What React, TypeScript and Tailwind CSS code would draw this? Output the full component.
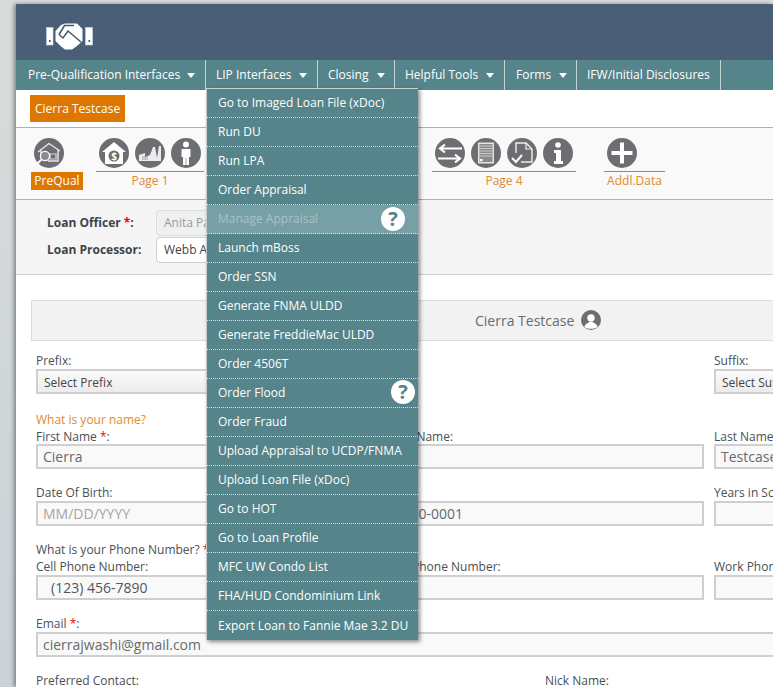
import React from "react";

const Circle = ({ children, size = 30 }: { children?: React.ReactNode; size?: number }) => (
  <svg width={size} height={size} viewBox="0 0 30 30" className="block shrink-0">
    <circle cx="15" cy="15" r="15" fill="#6d6e71" />
    {children}
  </svg>
);

const Logo = () => (
  <svg width="47" height="28" viewBox="0 0 47 28" className="block">
    <rect x="0.5" y="5.5" width="6.5" height="17.5" fill="#fff" stroke="#bcd8f0" strokeWidth="0.6" />
    <rect x="39.5" y="5.5" width="7" height="17.5" fill="#fff" stroke="#bcd8f0" strokeWidth="0.6" />
    <rect x="3" y="18" width="1.6" height="2" fill="#3f5870" />
    <rect x="42.5" y="18" width="1.6" height="2" fill="#3f5870" />
    <path d="M9.5 9 L15 3 L19 1.5 L31 1.5 L36.5 7 L36.5 19 L31 24 L26 27.5 L19 27.5 L15 24.5 L9.5 19 Z" fill="#fff" />
    <path d="M13 12.5 L18.5 3.5 L28 3.5 M13 12.5 L17 16 L22 9 L35 20" fill="none" stroke="#3f5870" strokeWidth="1.5" />
  </svg>
);

const HouseSearch = () => (
  <Circle>
    <path d="M4 14 L15 5.5 L26 13 M7 12 V16 M24 12 V23 H14" fill="none" stroke="#e8e8e8" strokeWidth="1.4" />
    <path d="M16 16 H22 V21 H16 Z" fill="none" stroke="#dcdcdc" strokeWidth="1.2" />
    <circle cx="11" cy="18" r="4.6" fill="#8b8c8e" stroke="#fff" strokeWidth="1.3" />
    <path d="M7.5 21.5 L3.5 25.5" stroke="#fff" strokeWidth="1.8" />
  </Circle>
);
const HouseDollar = () => (
  <Circle>
    <path d="M15 4 L27 14 L24 14 V26 H6 V14 H3 Z" fill="#fff" />
    <circle cx="15" cy="18" r="5.5" fill="#6d6e71" />
    <text x="15" y="21.5" textAnchor="middle" fontSize="10" fontWeight="700" fill="#fff" fontFamily="'Open Sans',sans-serif">$</text>
  </Circle>
);
const Factory = () => (
  <Circle>
    <path d="M4 23 V17 L10 15 V19 L15 17 L18 9 L20 9 L22 20 L24 8 L26 8 V23 Z" fill="#ececec" />
    <path d="M7 19 H13 M7 21 H13" stroke="#8a8a8a" strokeWidth="0.8" />
  </Circle>
);
const Person = () => (
  <Circle>
    <circle cx="15" cy="6.5" r="3" fill="#fff" />
    <path d="M10.5 11 H19.5 V19 H18 V27 H12 V19 H10.5 Z" fill="#fff" />
    <path d="M15 20 V27" stroke="#6d6e71" strokeWidth="0.6" />
  </Circle>
);
const Swap = () => (
  <Circle>
    <path d="M27 10.5 H6 M10 6.5 L5 10.5 L10 14.5" fill="none" stroke="#fff" strokeWidth="2.2" />
    <path d="M3 20.5 H25 M20 16.5 L25 20.5 L20 24.5" fill="none" stroke="#fff" strokeWidth="2.2" />
  </Circle>
);
const Doc = () => (
  <Circle>
    <rect x="7" y="4.5" width="16" height="21" fill="#e4e4e4" />
    <rect x="8.5" y="6" width="13" height="18" fill="#8b8c8e" />
    <path d="M9 8 H21 M9 10.5 H21 M9 13 H21 M9 15.5 H21 M9 18 H21" stroke="#d8d8d8" strokeWidth="0.8" />
    <rect x="9" y="21" width="2.5" height="2.2" fill="#fff" />
  </Circle>
);
const DocCheck = () => (
  <Circle>
    <path d="M9 15 V5 H19 L25 11 V24 H14" fill="none" stroke="#f0f0f0" strokeWidth="1.4" />
    <path d="M19 5 V11 H25" fill="none" stroke="#f0f0f0" strokeWidth="1.2" />
    <path d="M5 20 L9 24 L15 17" fill="none" stroke="#fff" strokeWidth="2" />
  </Circle>
);
const Info = () => (
  <Circle>
    <circle cx="15" cy="7" r="2.8" fill="#fff" />
    <path d="M11 12 H18 V23 H20 V26 H11 V23 H13 V15 H11 Z" fill="#fff" />
  </Circle>
);
const Plus = () => (
  <Circle>
    <path d="M15 4.5 V25.5 M4.5 15 H25.5" stroke="#fff" strokeWidth="4" />
  </Circle>
);
const User = () => (
  <Circle size={20}>
    <circle cx="15" cy="12" r="5.5" fill="#fff" />
    <path d="M5 25 C7 20 11 19.5 12.5 18 H17.5 C19 19.5 23 20 25 25 C21 29 9 29 5 25 Z" fill="#fff" />
  </Circle>
);

const Help = () => (
  <span className="flex h-6 w-6 items-center justify-center rounded-full bg-white text-[20px] font-bold leading-none text-[#55848a]">?</span>
);

const navItems = [
  { label: "Pre-Qualification Interfaces", w: "w-[190px] pl-[12px]", caret: "ml-[7px]" },
  { label: "LIP Interfaces", w: "w-[112px] pl-[10px]", caret: "ml-[7px]" },
  { label: "Closing", w: "w-[77px] pl-[10px]", caret: "ml-[9px]" },
  { label: "Helpful Tools", w: "w-[110px] pl-[10px]", caret: "ml-[8px]" },
  { label: "Forms", w: "w-[72px] pl-[11px]", caret: "ml-[8px]" },
  { label: "IFW/Initial Disclosures", w: "w-[144px] pl-[10px]", caret: "" },
];

const menuItems = [
  "Go to Imaged Loan File (xDoc)",
  "Run DU",
  "Run LPA",
  "Order Appraisal",
  "Manage Appraisal",
  "Launch mBoss",
  "Order SSN",
  "Generate FNMA ULDD",
  "Generate FreddieMac ULDD",
  "Order 4506T",
  "Order Flood",
  "Order Fraud",
  "Upload Appraisal to UCDP/FNMA",
  "Upload Loan File (xDoc)",
  "Go to HOT",
  "Go to Loan Profile",
  "MFC UW Condo List",
  "FHA/HUD Condominium Link",
  "Export Loan to Fannie Mae 3.2 DU",
];

const Field = ({
  label,
  value,
  placeholder,
  labelClass = "h-[18px] leading-[20px]",
  indent = false,
}: {
  label?: React.ReactNode;
  value?: string;
  placeholder?: string;
  labelClass?: string;
  indent?: boolean;
}) => (
  <div className="w-[329px] shrink-0">
    <div className={`text-[12px] text-[#4a4f55] ${labelClass}`}>{label}</div>
    <div
      className={`h-[25px] border-2 border-[#cfcfcf] bg-[#f9f9f9] text-[14px] leading-[22px] ${indent ? "pl-[13px] text-[#555]" : "pl-[5px]"} ${placeholder ? "text-[#a5a5a5]" : "text-[#6a6a6a]"}`}
    >
      {value || placeholder}
    </div>
  </div>
);

const Select = ({ text }: { text: string }) => (
  <div className="h-[25px] w-[329px] shrink-0 overflow-hidden whitespace-nowrap border-2 border-[#cfcfcf] bg-gradient-to-b from-[#fbfbfb] to-[#ececec] pl-[6px] text-[12px] leading-[23px] text-[#444]">
    {text}
  </div>
);

const Star = () => <span className="text-[#ff0000]">*</span>;

const Group = ({ w, label, children, className = "" }: { w: string; label: string; children?: React.ReactNode; className?: string }) => (
  <div className={`flex shrink-0 flex-col ${w} ${className}`}>
    <div className="flex h-[37px] items-start justify-center gap-[6px] border-b border-[#d9791a] pt-[3px]">{children}</div>
    <div className="text-center text-[12px] leading-[18px] text-[#e08a2e]">{label}</div>
  </div>
);

const small = "h-[17px] leading-[19px]";

export default function App() {
  return (
    <div
      className="relative h-[687px] w-[773px] overflow-hidden bg-gradient-to-b from-[#d9dcda] to-[#c9d3d9] pt-[4px] pl-[16px] text-[#4a4f55]"
      style={{ fontFamily: "'Open Sans', sans-serif" }}
    >
      <div className="h-[683px] w-[757px] overflow-hidden bg-white shadow-[-2px_0_4px_rgba(60,60,60,0.55)]">
        <div className="flex h-[56px] items-start bg-[#4a5f77] pl-[30px] pt-[18px]">
          <Logo />
        </div>

        <nav className="flex h-[30px] bg-[#55848a] text-[12px] text-white">
          {navItems.map((n) => (
            <div
              key={n.label}
              className={`flex h-full shrink-0 items-center border-r border-[#c5d2d2] pb-[1px] ${n.w} whitespace-nowrap`}
            >
              {n.label}
              {n.caret && (
                <span className={`inline-block h-0 w-0 translate-y-[1px] border-x-[4.5px] border-t-[5px] border-x-transparent border-t-white ${n.caret}`} />
              )}
            </div>
          ))}
        </nav>

        <div className="flex h-[38px] items-start border-b border-[#eba556] pl-[14px] pt-[5px]">
          <div className="flex h-[27px] items-center bg-[#dd7700] px-[5px] text-[12px] text-white">Cierra Testcase</div>
        </div>

        <div className="flex h-[72px] items-start border-b border-[#eba556] bg-[#f9f9f9] pt-[7px]">
          <div className="ml-[15px] flex w-[52px] shrink-0 flex-col items-start">
            <div className="pl-[3px] pt-[3px]"><HouseSearch /></div>
            <div className="mt-[4px] flex h-[18px] w-[52px] items-center justify-center bg-[#dd7700] text-[12px] text-white">PreQual</div>
          </div>
          <Group w="w-[108px]" label="Page 1" className="ml-[13px]">
            <HouseDollar />
            <Factory />
            <Person />
          </Group>
          <Group w="w-[200px]" label="" className="ml-[12px]" />
          <Group w="w-[144px]" label="Page 4" className="ml-[16px]">
            <Swap />
            <Doc />
            <DocCheck />
            <Info />
          </Group>
          <Group w="w-[61px]" label="Addl.Data" className="ml-[28px]">
            <span className="mr-[25px]"><Plus /></span>
          </Group>
        </div>

        <div className="flex h-[75px] flex-col gap-[1px] border-b border-[#cfcfcf] bg-[#f5f5f5] pl-[31px] pt-[10px] text-[12px]">
          <div className="flex h-[26px] items-center">
            <span className="w-[109px] font-bold text-[#3f444a]">Loan Officer <Star />:</span>
            <div className="flex h-[26px] w-[220px] items-center rounded-[4px] border border-[#ddd] bg-[#f0f0f0] pl-[7px] text-[#999]">Anita Patel</div>
          </div>
          <div className="flex h-[26px] items-center">
            <span className="w-[109px] font-bold text-[#3f444a]">Loan Processor:</span>
            <div className="flex h-[26px] w-[220px] items-center rounded-[4px] border border-[#cfcfcf] bg-white pl-[7px] text-[#444]">Webb Adams</div>
          </div>
        </div>

        <div className="pl-[15px] pt-[25px]">
          <div className="flex h-[41px] w-[760px] items-center justify-start gap-[7px] border border-[#dcdcdc] bg-[#f2f2f2] pb-[1px] pl-[443px] text-[14px] text-[#666d75]">
            Cierra Testcase
            <User />
          </div>

          <div className="flex gap-[10px] pl-[5px] pt-[10px]">
            <div className="w-[329px] shrink-0">
              <div className="h-[18px] text-[12px] leading-[20px]">Prefix:</div>
              <Select text="Select Prefix" />
            </div>
            <div className="w-[329px] shrink-0" />
            <div className="w-[329px] shrink-0">
              <div className="h-[18px] text-[12px] leading-[20px]">Suffix:</div>
              <Select text="Select Suffix" />
            </div>
          </div>

          <div className="flex gap-[10px] pl-[5px] pt-[17px]">
            <div className="w-[329px] shrink-0">
              <div className="h-[16px] text-[12px] leading-[18px] text-[#df8a30]">What is your name?</div>
              <Field label={<>First Name <Star />:</>} value="Cierra" labelClass={small} />
            </div>
            <div className="w-[329px] shrink-0 pt-[16px]"><Field label="Middle Name:" labelClass={small} /></div>
            <div className="w-[329px] shrink-0 pt-[16px]"><Field label={<>Last Name <Star />:</>} value="Testcase" labelClass={small} /></div>
          </div>

          <div className="flex gap-[10px] pl-[5px] pt-[14px]">
            <Field label="Date Of Birth:" placeholder="MM/DD/YYYY" />
            <Field label="SSN:" value="000-00-0001" />
            <Field label="Years in School:" />
          </div>

          <div className="flex gap-[10px] pl-[5px] pt-[15px]">
            <div className="w-[329px] shrink-0">
              <div className="h-[16px] whitespace-nowrap text-[12px] leading-[18px]">What is your Phone Number? <Star /></div>
              <Field label="Cell Phone Number:" value="(123) 456-7890" indent />
            </div>
            <div className="w-[329px] shrink-0 pt-[16px]"><Field label="Home Phone Number:" /></div>
            <div className="w-[329px] shrink-0 pt-[16px]"><Field label="Work Phone Number:" /></div>
          </div>

          <div className="pl-[5px] pt-[14px]">
            <div className="h-[18px] text-[12px] leading-[20px]">Email <Star />:</div>
            <div className="h-[25px] w-[760px] border-2 border-[#cfcfcf] bg-[#f9f9f9] pl-[5px] text-[14px] leading-[22px] text-[#6a6a6a]">cierrajwashi@gmail.com</div>
          </div>

          <div className="flex pl-[5px] pt-[15px] text-[12px]">
            <div className="w-[509px] shrink-0">Preferred Contact:</div>
            <div>Nick Name:</div>
          </div>
        </div>
      </div>

      <div className="absolute left-[206px] top-[88px] w-[212px] border-t border-l border-[#c5cfcf] bg-[#55848a] text-[12px] text-white shadow-[2px_2px_4px_rgba(0,0,0,0.45)]">
        {menuItems.map((m, i) => {
          const manage = m === "Manage Appraisal";
          const flood = m === "Order Flood";
          return (
            <div
              key={m}
              className={`relative flex h-[29px] items-center whitespace-nowrap pl-[11px] ${i < menuItems.length - 1 ? "border-b border-dotted border-[#d5e0e0]" : ""} ${manage ? "bg-[#76a0a6] text-[#a9c3c7]" : ""}`}
            >
              {m}
              {manage && <span className="absolute left-[174px] top-[2px]"><Help /></span>}
              {flood && <span className="absolute left-[184px] top-[1px]"><Help /></span>}
            </div>
          );
        })}
      </div>
    </div>
  );
}
